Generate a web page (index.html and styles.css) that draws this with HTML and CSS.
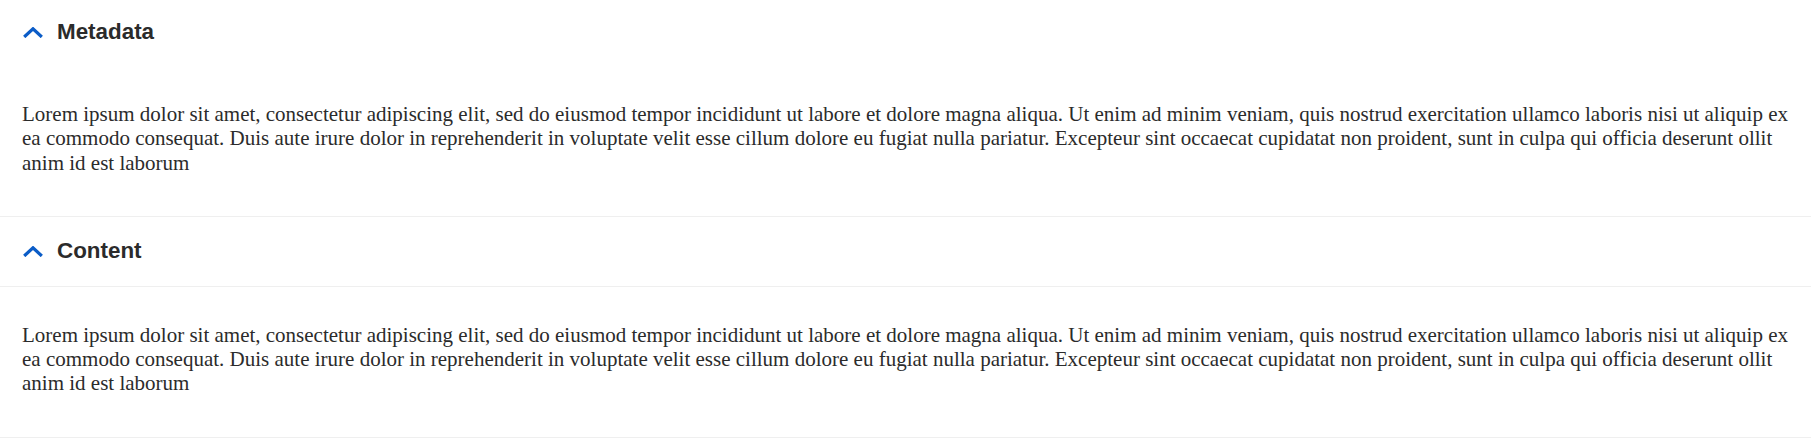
FILE: index.html
```html
<!DOCTYPE html>
<html lang="en">
<head>
<meta charset="utf-8">
<title>Accordion</title>
<link rel="stylesheet" href="styles.css">
</head>
<body>
<div class="accordion">
  <section class="panel panel-first">
    <div class="panel-header">
      <svg class="chevron" width="20" height="11" viewBox="0 0 20 11" aria-hidden="true"><polyline points="1.2,10 10,1.8 18.8,10" fill="none" stroke="#0b5cc7" stroke-width="3.2"/></svg>
      <h2 class="panel-title">Metadata</h2>
    </div>
    <div class="panel-body">
      <p>Lorem ipsum dolor sit amet, consectetur adipiscing elit, sed do eiusmod tempor incididunt ut labore et dolore magna aliqua. Ut enim ad minim veniam, quis nostrud exercitation ullamco laboris nisi ut aliquip ex ea commodo consequat. Duis aute irure dolor in reprehenderit in voluptate velit esse cillum dolore eu fugiat nulla pariatur. Excepteur sint occaecat cupidatat non proident, sunt in culpa qui officia deserunt ollit anim id est laborum</p>
    </div>
  </section>
  <section class="panel panel-second">
    <div class="panel-header">
      <svg class="chevron" width="20" height="11" viewBox="0 0 20 11" aria-hidden="true"><polyline points="1.2,10 10,1.8 18.8,10" fill="none" stroke="#0b5cc7" stroke-width="3.2"/></svg>
      <h2 class="panel-title">Content</h2>
    </div>
    <div class="panel-body">
      <p>Lorem ipsum dolor sit amet, consectetur adipiscing elit, sed do eiusmod tempor incididunt ut labore et dolore magna aliqua. Ut enim ad minim veniam, quis nostrud exercitation ullamco laboris nisi ut aliquip ex ea commodo consequat. Duis aute irure dolor in reprehenderit in voluptate velit esse cillum dolore eu fugiat nulla pariatur. Excepteur sint occaecat cupidatat non proident, sunt in culpa qui officia deserunt ollit anim id est laborum</p>
    </div>
  </section>
</div>
</body>
</html>
```
FILE: styles.css
```css
html, body {
  margin: 0;
  padding: 0;
  background: #ffffff;
}

.accordion {
  margin-right: 5px;
}

.panel {
  border-bottom: 1px solid #efefef;
}

.panel-header {
  display: flex;
  align-items: center;
  gap: 14px;
  padding-left: 23px;
  height: 64px;
}

.panel-second .panel-header {
  height: 69px;
  border-bottom: 1px solid #efefef;
}

.chevron {
  display: block;
  flex: none;
}

.panel-title {
  margin: 0;
  font-family: "Liberation Sans", Arial, sans-serif;
  font-weight: bold;
  font-size: 22.4px;
  color: #2b2b2b;
}

.panel-body {
  padding: 38px 22px 41px;
}

.panel-second .panel-body {
  padding-top: 36px;
}

.panel-body p {
  margin: 0;
  font-family: "Liberation Serif", "Times New Roman", serif;
  font-size: 21px;
  line-height: 24.3px;
  color: #2b2b2b;
}
```
